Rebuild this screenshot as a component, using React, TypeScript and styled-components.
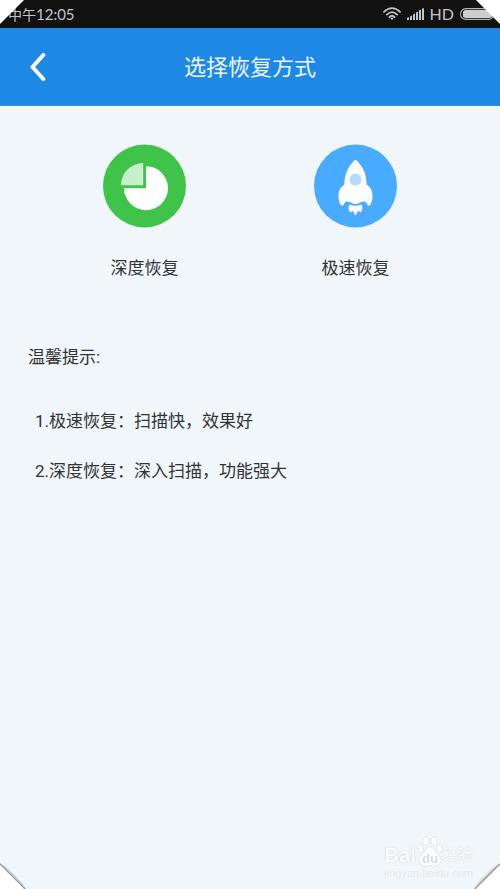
import React from "react";
import styled, { createGlobalStyle } from "styled-components";

const GlobalStyle = createGlobalStyle`
  *, *::before, *::after { box-sizing: border-box; }
  body {
    margin: 0;
    background: #f1f6fa;
    font-family: Roboto, "Noto Sans CJK SC", sans-serif;
    color: #2f3336;
  }
`;

const Screen = styled.div`
  position: relative;
  display: flex;
  flex-direction: column;
  min-height: 100vh;
  overflow: hidden;
  background: #f1f6fa;
`;

const StatusBar = styled.div`
  display: flex;
  align-items: center;
  justify-content: space-between;
  height: 28px;
  padding: 0 4px 0 8px;
  background: #121212;
  color: #c4c4c4;
  font-size: 16px;
  line-height: 28px;
`;

const Clock = styled.time`
  font-family: Lato, "Noto Sans CJK SC", sans-serif;
  font-size: 15px;
`;

const ClockPeriod = styled.span`
  font-size: 14px;
`;

const StatusIcons = styled.div`
  display: flex;
  align-items: center;
  gap: 6px;

  svg { display: block; }
`;

const NetworkLabel = styled.span`
  font-family: Lato, sans-serif;
`;

const Header = styled.header`
  display: grid;
  grid-template-columns: 76px 1fr 76px;
  align-items: center;
  height: 78px;
  background: #1e88e5;
  border-bottom: 1px solid #3493e7;
`;

const BackButton = styled.button`
  display: flex;
  align-items: center;
  justify-content: center;
  height: 76px;
  padding: 0;
  border: 0;
  background: transparent;
  cursor: pointer;
`;

const Title = styled.h1`
  margin: 0;
  padding-top: 2px;
  color: #f0f7fd;
  font-size: 22px;
  font-weight: 400;
  line-height: 32px;
  text-align: center;
`;

const Modes = styled.section`
  display: grid;
  grid-template-columns: 1fr 1fr;
  padding: 38px 39px 0;
`;

const ModeButton = styled.button`
  display: flex;
  flex-direction: column;
  align-items: center;
  gap: 27px;
  padding: 0;
  border: 0;
  background: transparent;
  color: inherit;
  font-family: inherit;
  font-size: 17px;
  line-height: 26px;
  cursor: pointer;
`;

const Tips = styled.section`
  padding: 63px 28px 0;
  font-size: 17px;
  line-height: 26px;
`;

const TipsTitle = styled.h2`
  margin: 0;
  font-size: 17px;
  font-weight: 400;
`;

const TipList = styled.ul`
  display: flex;
  flex-direction: column;
  gap: 24px;
  margin: 38px 0 0;
  padding: 0 0 0 7px;
  list-style: none;
`;

const Watermark = styled.div`
  display: flex;
  flex-direction: column;
  align-items: center;
  align-self: flex-end;
  margin: auto 27px 9px 0;
  color: #ffffff;
  font-family: "Liberation Sans", "Noto Sans CJK SC", sans-serif;
`;

const WatermarkBrand = styled.div`
  display: flex;
  align-items: flex-end;
  height: 32px;
  font-size: 20px;
  line-height: 24px;

  svg { display: block; }
`;

const WatermarkName = styled.span`
  font-size: 15px;
  font-weight: 500;
  text-shadow: 0 0 1px #b8bec3;
`;

const WatermarkLatin = styled.span`
  font-weight: 700;
  text-shadow: 0 0 1px #b8bec3, 0 0 1px #d3d8dc;
`;

const WatermarkUrl = styled.div`
  color: #e5e9ec;
  font-size: 11px;
  line-height: 13px;
`;

type CornerPlace = "tl" | "tr" | "bl" | "br";

const cornerRules: Record<CornerPlace, string> = {
  tl: "top: 0; left: 0;",
  tr: "top: 0; right: 0; transform: scaleX(-1);",
  bl: "bottom: 0; left: 0; transform: scaleY(-1);",
  br: "bottom: 0; right: 0; transform: scale(-1);",
};

const CornerSvg = styled.svg<{ $place: CornerPlace }>`
  position: absolute;
  pointer-events: none;
  ${({ $place }) => cornerRules[$place]}
`;

function Corner({ place, shaded }: { place: CornerPlace; shaded?: boolean }) {
  const id = `fold-${place}`;
  return (
    <CornerSvg $place={place} width="32" height="32" viewBox="0 0 32 32" aria-hidden="true">
      <defs>
        <linearGradient id={id} gradientUnits="userSpaceOnUse" x1="12" y1="12" x2="15" y2="15">
          <stop offset="0" stopColor="#606060" stopOpacity="0.8" />
          <stop offset="0.5" stopColor="#909090" stopOpacity="0.4" />
          <stop offset="1" stopColor="#b0b0b0" stopOpacity="0" />
        </linearGradient>
      </defs>
      {shaded && <path d="M0 24L24 0H26Q21 9 16 14Q9 21 0 26Z" fill={`url(#${id})`} />}
      <path d="M0 0H24L0 24Z" fill="#fff" />
    </CornerSvg>
  );
}

function WifiIcon() {
  return (
    <svg width="18" height="14" viewBox="0 0 18 14" fill="none" stroke="#c4c4c4" strokeWidth="1.8" strokeLinecap="round" aria-label="Wi-Fi">
      <path d="M1 4.8Q9-2.6 17 4.8M3.8 7.6Q9 2.7 14.2 7.6M6.4 10.1Q9 7.4 11.6 10.1" />
      <path d="M7.4 11.2Q9 10 10.6 11.2L9 13Z" fill="#c4c4c4" stroke="none" />
    </svg>
  );
}

function SignalIcon() {
  return (
    <svg width="17" height="12" viewBox="0 0 17 12" fill="#c4c4c4" aria-label="Signal">
      <path d="M0 12V10L2 9V12ZM3 12V8.5L5 7.5V12ZM6 12V6.5L8 5.5V12ZM9 12V4.5L11 3.5V12ZM12 12V2.5L14 1.5V12ZM15 12V.8L17 0V12Z" />
    </svg>
  );
}

function BatteryIcon() {
  return (
    <svg width="36" height="12" viewBox="0 0 36 12" aria-label="Battery">
      <rect x="0.6" y="0.6" width="33" height="10.8" rx="5" fill="none" stroke="#b5b5b5" strokeWidth="1.1" />
      <rect x="3" y="2" width="29" height="8" rx="2.5" fill="#cecece" />
      <path d="M34 4Q36 6 34 8Z" fill="#b5b5b5" />
    </svg>
  );
}

function BackIcon() {
  return (
    <svg width="16" height="28" viewBox="0 0 16 28" fill="none" stroke="#fff" strokeWidth="4" strokeLinecap="round" strokeLinejoin="round" aria-hidden="true">
      <path d="M13.3 2L2.5 14L13.3 26" />
    </svg>
  );
}

function PieIcon() {
  return (
    <svg width="84" height="84" viewBox="0 0 84 84" aria-hidden="true">
      <circle cx="41.5" cy="42" r="41.5" fill="#3fc449" />
      <path d="M43 22.2A22 22 0 1 1 21 44.2H43Z" fill="#fff" />
      <path d="M40.2 19V41.2H18A22.2 22.2 0 0 1 40.2 19Z" fill="#c8efcb" />
    </svg>
  );
}

function RocketIcon() {
  return (
    <svg width="84" height="84" viewBox="0 0 84 84" aria-hidden="true">
      <circle cx="41.5" cy="42" r="41.5" fill="#48abfd" />
      <path
        d="M41.5 16C42.7 16 43.9 17.7 45.9 20.3C50.3 26 52.3 31 52.7 40.6C56.9 44.2 58.5 46.7 58.5 51.4C58.5 56.4 57.2 60.3 55.3 61.6C54.3 62.2 53.3 60.4 51.5 57.7C46.8 56.4 45.5 60 41.5 60C37.5 60 36.2 56.4 31.5 57.7C29.7 60.4 28.7 62.2 27.7 61.6C25.8 60.3 24.5 56.4 24.5 51.4C24.5 46.7 26.1 44.2 30.3 40.6C30.7 31 32.7 26 37.1 20.3C39.1 17.7 40.3 16 41.5 16Z"
        fill="#fff"
      />
      <circle cx="41.5" cy="35.5" r="6" fill="#b5dbfc" />
      <path d="M36 60.5Q41.5 63.2 47 60.5C49.3 62.7 48.7 65.5 46.7 68.4L44.1 66.7Q43.1 69.4 41.5 71.5Q39.9 69.4 38.9 66.7L36.3 68.4C34.3 65.5 33.7 62.7 36 60.5Z" fill="#fff" />
    </svg>
  );
}

function PawLogo() {
  return (
    <svg width="27" height="31" viewBox="-1 0 27 31" fill="#fff" stroke="#dce0e3" strokeWidth="0.8" aria-hidden="true">
      <ellipse cx="3.6" cy="12.6" rx="3" ry="4" transform="rotate(-12 3.6 12.6)" />
      <ellipse cx="9" cy="5" rx="3" ry="4.2" />
      <ellipse cx="17" cy="5" rx="3" ry="4.2" />
      <ellipse cx="22.4" cy="12.6" rx="3" ry="4" transform="rotate(12 22.4 12.6)" />
      <path d="M13 11C17 11 17.5 15.5 21.3 18.6C24.5 21.2 25.4 27 21 29.5C18 31 16 29.5 13 29.5C10 29.5 8 31 5 29.5C.6 27 1.5 21.2 4.7 18.6C8.5 15.5 9 11 13 11Z" />
      <text x="13" y="27" textAnchor="middle" fontFamily="Liberation Sans, sans-serif" fontSize="13" fontWeight="700" fill="#d8dde0" stroke="none">du</text>
    </svg>
  );
}

const modes = [
  { label: "深度恢复", icon: <PieIcon /> },
  { label: "极速恢复", icon: <RocketIcon /> },
];

const tips = ["1.极速恢复：扫描快，效果好", "2.深度恢复：深入扫描，功能强大"];

export default function App() {
  return (
    <>
      <GlobalStyle />
      <Screen>
        <StatusBar>
          <Clock>
            <ClockPeriod>中午</ClockPeriod>12:05
          </Clock>
          <StatusIcons>
            <WifiIcon />
            <SignalIcon />
            <NetworkLabel>HD</NetworkLabel>
            <BatteryIcon />
          </StatusIcons>
        </StatusBar>
        <Header>
          <BackButton type="button" aria-label="返回">
            <BackIcon />
          </BackButton>
          <Title>选择恢复方式</Title>
        </Header>
        <Modes>
          {modes.map(({ label, icon }) => (
            <ModeButton key={label} type="button">
              {icon}
              <span>{label}</span>
            </ModeButton>
          ))}
        </Modes>
        <Tips>
          <TipsTitle>温馨提示:</TipsTitle>
          <TipList>
            {tips.map((tip) => (
              <li key={tip}>{tip}</li>
            ))}
          </TipList>
        </Tips>
        <Watermark>
          <WatermarkBrand>
            <WatermarkLatin>Bai</WatermarkLatin>
            <PawLogo />
            <WatermarkName>经验</WatermarkName>
          </WatermarkBrand>
          <WatermarkUrl>jingyan.baidu.com</WatermarkUrl>
        </Watermark>
        <Corner place="tl" />
        <Corner place="tr" />
        <Corner place="bl" shaded />
        <Corner place="br" shaded />
      </Screen>
    </>
  );
}
